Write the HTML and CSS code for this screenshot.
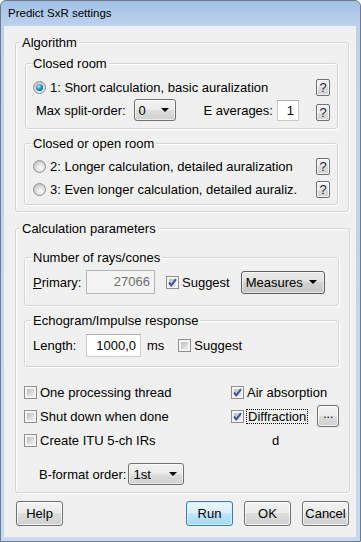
FILE: index.html
```html
<!DOCTYPE html>
<html lang="en">
<head>
    <meta charset="UTF-8">
    <meta name="viewport" content="width=device-width, initial-scale=1.0">
    <title>Predict SxR settings</title>
    <link rel="stylesheet" href="styles.css">
</head>
<body>
    <div class="window">
        <div class="titlebar">Predict SxR settings</div>
        <div class="client">
            <fieldset class="group outer algo">
                <legend>Algorithm</legend>

                <fieldset class="group inner closed">
                    <legend>Closed room</legend>
                    <div class="row radio-row first">
                        <span class="radio checked"></span>
                        <span class="label">1: Short calculation, basic auralization</span>
                        <button class="qbtn">?</button>
                    </div>
                    <div class="row split-row">
                        <span class="label">Max split-order:</span>
                        <div class="combo combo-split"><span>0</span><span class="arrow"></span></div>
                        <span class="label e-label">E averages:</span>
                        <div class="edit edit-avg">1</div>
                        <button class="qbtn">?</button>
                    </div>
                </fieldset>

                <fieldset class="group inner open">
                    <legend>Closed or open room</legend>
                    <div class="row radio-row first">
                        <span class="radio"></span>
                        <span class="label">2: Longer calculation, detailed auralization</span>
                        <button class="qbtn">?</button>
                    </div>
                    <div class="row radio-row second">
                        <span class="radio"></span>
                        <span class="label">3: Even longer calculation, detailed auraliz.</span>
                        <button class="qbtn">?</button>
                    </div>
                </fieldset>
            </fieldset>

            <fieldset class="group outer calc">
                <legend>Calculation parameters</legend>

                <fieldset class="group inner rays">
                    <legend>Number of rays/cones</legend>
                    <div class="row rays-row">
                        <span class="label field-label"><u>P</u>rimary:</span>
                        <div class="edit edit-primary disabled">27066</div>
                        <span class="check checked"><svg viewBox="0 0 13 13"><path d="M3 6.5 L5.3 9.3 L10 3.2"/></svg></span>
                        <span class="label check-label">Suggest</span>
                        <div class="combo combo-measures"><span>Measures</span><span class="arrow"></span></div>
                    </div>
                </fieldset>

                <fieldset class="group inner echo">
                    <legend>Echogram/Impulse response</legend>
                    <div class="row echo-row">
                        <span class="label field-label">Length:</span>
                        <div class="edit edit-length">1000,0</div>
                        <span class="label unit">ms</span>
                        <span class="check"></span>
                        <span class="label check-label">Suggest</span>
                    </div>
                </fieldset>

                <div class="options">
                    <div class="opt">
                        <span class="check"></span>
                        <span class="label check-label">One processing thread</span>
                    </div>
                    <div class="opt">
                        <span class="check checked"><svg viewBox="0 0 13 13"><path d="M3 6.5 L5.3 9.3 L10 3.2"/></svg></span>
                        <span class="label check-label">Air absorption</span>
                    </div>
                    <div class="opt">
                        <span class="check"></span>
                        <span class="label check-label">Shut down when done</span>
                    </div>
                    <div class="opt">
                        <span class="check checked"><svg viewBox="0 0 13 13"><path d="M3 6.5 L5.3 9.3 L10 3.2"/></svg></span>
                        <span class="label check-label focus">Diffraction</span>
                        <button class="btn more-btn">...</button>
                    </div>
                    <div class="opt">
                        <span class="check"></span>
                        <span class="label check-label">Create ITU 5-ch IRs</span>
                    </div>
                    <div class="opt">
                        <span class="label d-label">d</span>
                    </div>
                </div>

                <div class="row bformat-row">
                    <span class="label">B-format order:</span>
                    <div class="combo combo-bformat"><span>1st</span><span class="arrow"></span></div>
                </div>
            </fieldset>

            <div class="buttons">
                <button class="btn">Help</button>
                <span class="spacer"></span>
                <button class="btn default">Run</button>
                <button class="btn">OK</button>
                <button class="btn">Cancel</button>
            </div>
        </div>
    </div>
</body>
</html>
```

FILE: styles.css
```css
* {
    margin: 0;
    padding: 0;
    box-sizing: border-box;
}

body {
    font-family: "Liberation Sans", Arial, sans-serif;
    font-size: 13px;
    color: #000;
    background: #fff;
}

.window {
    width: 361px;
    height: 542px;
    border: 1px solid #6c7b8e;
    border-radius: 6px 6px 0 0;
    background: linear-gradient(#a3c0e5, #bdd3ec 26px, #c6d9ee);
    overflow: hidden;
    display: flex;
    flex-direction: column;
}

.titlebar {
    height: 25px;
    padding-left: 7px;
    font-size: 11.5px;
    line-height: 25px;
    color: #000;
}

.client {
    flex: 1;
    margin: 0 4px 4px 3px;
    background: #f0f0f0;
    display: flex;
    flex-direction: column;
}

/* group boxes */
.group {
    border: 1px solid #d5d5d5;
    border-radius: 3px;
    box-shadow: inset 1px 1px 0 #fff, 1px 1px 0 #fff;
}

.group legend {
    line-height: 15px;
    padding: 0 2px;
}

.outer {
    margin: 0 7px 0 11px;
    padding: 0 10px 0 8px;
}

.outer > legend {
    margin-left: -4px;
}

.inner {
    padding: 0 7px 0 8px;
}

.inner > legend {
    margin-left: -2px;
}

.algo {
    margin-top: 9px;
    padding-bottom: 6px;
}

.closed {
    margin-top: 6px;
    margin-left: 1px;
    padding-left: 7px;
    padding-bottom: 7px;
}

.open {
    margin-top: 7px;
    padding-bottom: 5px;
}

.calc {
    margin-top: 9px;
    padding-bottom: 7px;
}

.rays {
    margin-top: 14px;
    padding-bottom: 11px;
}

.echo {
    margin-top: 7px;
    padding-bottom: 9px;
}

/* rows */
.row {
    display: flex;
    align-items: center;
}

.radio-row {
    height: 20px;
}

.closed .radio-row.first {
    margin-top: 6px;
}

.open .radio-row.first {
    margin-top: 5px;
}

.open .radio-row.second {
    margin-top: 3px;
}

.radio-row .label {
    margin-left: 4px;
}

.split-row {
    height: 22px;
    margin-top: 2px;
    padding-left: 3px;
}

.split-row .qbtn {
    align-self: flex-end;
}

.rays-row {
    height: 24px;
    margin-top: 5px;
}

.echo-row {
    height: 23px;
    margin-top: 6px;
}

.field-label {
    width: 53px;
}

.bformat-row {
    height: 22px;
    margin-top: 11px;
    padding-left: 15px;
}

/* radios and checkboxes */
.radio {
    position: relative;
    width: 13px;
    height: 13px;
    border: 1px solid #8f8f8f;
    border-radius: 50%;
    background: radial-gradient(circle at 60% 65%, #fbfbfb 0, #e6e6e6 35%, #c5c5c5 80%);
    flex-shrink: 0;
}

.radio.checked::after {
    content: "";
    position: absolute;
    left: 2px;
    top: 2px;
    width: 7px;
    height: 7px;
    border-radius: 50%;
    background: radial-gradient(circle at 40% 35%, #b9f4ff 0, #2eaae0 35%, #0f5a91 75%, #0a3f6b 100%);
}

.check {
    width: 13px;
    height: 13px;
    border: 1px solid #8e8f8f;
    padding: 2px;
    background: linear-gradient(135deg, #b9bdc2, #ededed) content-box, #f4f4f4;
    flex-shrink: 0;
    position: relative;
}

.check svg {
    position: absolute;
    left: -1px;
    top: -1px;
    width: 13px;
    height: 13px;
}

.check svg path {
    fill: none;
    stroke: #3b55a0;
    stroke-width: 2;
}

.check-label {
    margin-left: 3px;
}

/* edits */
.edit {
    height: 21px;
    border: 1px solid #c9ced6;
    border-top-color: #abadb3;
    background: #fff;
    text-align: right;
    padding-right: 4px;
    line-height: 19px;
}

.edit-avg {
    width: 22px;
    margin-left: 4px;
}

.edit-primary {
    width: 69px;
    height: 24px;
    line-height: 22px;
    margin-left: 0;
}

.edit.disabled {
    background: #f4f4f4;
    border-color: #b5b5b5;
    color: #6d6d6d;
}

.edit-length {
    width: 55px;
    height: 23px;
    line-height: 21px;
}

.unit {
    margin-left: 6px;
}

.rays-row .check {
    margin-left: 11px;
}

.echo-row .check {
    margin-left: 14px;
}

/* combo boxes */
.combo {
    height: 22px;
    border: 1px solid #707070;
    border-radius: 3px;
    background: linear-gradient(#f2f2f2, #ebebeb 50%, #dddddd 50%, #cfcfcf);
    display: flex;
    align-items: center;
    justify-content: space-between;
    padding: 0 6px 0 4px;
    box-shadow: inset 0 0 0 1px rgba(255,255,255,0.6);
}

.arrow {
    width: 0;
    height: 0;
    border-left: 4px solid transparent;
    border-right: 4px solid transparent;
    border-top: 4px solid #000;
}

.combo-split {
    width: 42px;
    margin-left: 8px;
}

.e-label {
    margin-left: 28px;
}

.combo-measures {
    width: 84px;
    height: 23px;
    margin-left: 11px;
    padding: 0 7px 0 4px;
    border-color: #5e5e5e;
    background: linear-gradient(#e9e9e9, #e0e0e0 50%, #d2d2d2 50%, #c6c6c6);
}

.combo-bformat {
    width: 56px;
    margin-left: 2px;
}

/* buttons */
.btn, .qbtn {
    font-family: inherit;
    font-size: 13px;
    color: #000;
    border: 1px solid #707070;
    border-radius: 3px;
    background: linear-gradient(#f2f2f2, #ebebeb 50%, #dddddd 50%, #cfcfcf);
    box-shadow: inset 0 0 0 1px rgba(255,255,255,0.7);
}

.qbtn {
    width: 14px;
    height: 17px;
    margin-left: auto;
    border-radius: 2px;
    line-height: 15px;
    color: #1d1d3a;
}

.btn {
    width: 47px;
    height: 25px;
}

.btn.default {
    border-color: #3c7fb1;
    background: linear-gradient(#eaf6fd, #d9f0fc 50%, #bee6fd 50%, #a7d9f5);
    box-shadow: inset 0 0 0 1px #cff0ff;
}

/* options grid */
.options {
    display: grid;
    grid-template-columns: 207px 1fr;
    grid-auto-rows: 24px;
    margin-top: 13px;
}

.opt {
    display: flex;
    align-items: center;
}

.focus {
    outline: 1px dotted #000;
    outline-offset: 0;
    padding: 0 1px;
    line-height: 13px;
}

.more-btn {
    width: 22px;
    height: 22px;
    margin-left: 10px;
    padding-bottom: 4px;
    font-size: 12px;
}

.d-label {
    padding-left: 41px;
}

.buttons {
    display: flex;
    gap: 11px;
    margin: 8px 7px 0 12px;
}

.spacer {
    flex: 1;
}
```
